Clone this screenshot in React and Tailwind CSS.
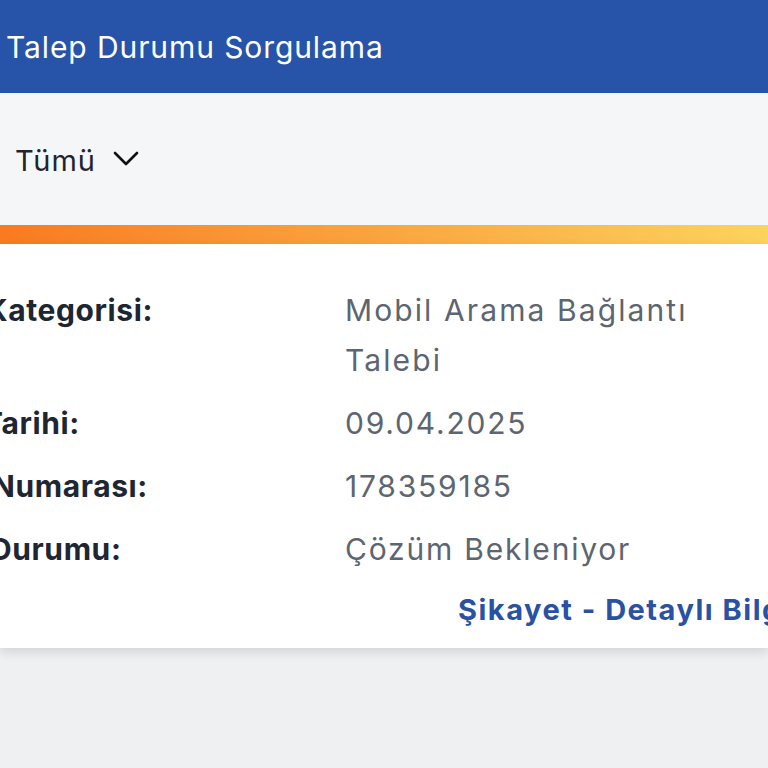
import React from "react";

const font = { fontFamily: "Inter, 'Noto Sans', sans-serif" };

function Row({ label, children, labelShift }) {
  return (
    <div className="flex items-start">
      <div className="w-[345px] shrink-0 overflow-hidden">
        <div className={`whitespace-nowrap font-bold text-[#1e2533] tracking-[0.6px] ${labelShift}`}>{label}</div>
      </div>
      <div className="flex-1 text-[#5d6570] tracking-[1.8px]">{children}</div>
    </div>
  );
}

export default function App() {
  return (
    <div className="w-[768px] h-[768px] overflow-hidden bg-[#eff0f2]" style={font}>
      <div className="h-[93px] bg-[#2754a8] flex items-center pl-[6px]">
        <span className="text-white text-[30px] tracking-[0.9px] leading-none">Talep Durumu Sorgulama</span>
      </div>
      <div className="h-[132px] bg-[#f5f6f8] flex items-center pl-[15px] gap-[17px]">
        <span className="text-[29px] tracking-[1px] text-[#1f2430] leading-none mt-[3px]">Tümü</span>
        <svg width="26" height="18" viewBox="0 0 26 18" fill="none" className="mt-[-2px]">
          <path d="M2 4 L13 15 L24 4" stroke="#111" strokeWidth="2.6" strokeLinecap="round" strokeLinejoin="round" />
        </svg>
      </div>
      <div className="h-[19px] bg-gradient-to-r from-[#f97a20] via-[#f9a540] to-[#fbd35d]" />
      <div className="bg-white shadow-[0_4px_10px_rgba(0,0,0,0.12)] pt-[41px] pb-[13px] overflow-hidden">
        <div className="flex flex-col gap-[13px] text-[30px] leading-[50px]">
          <Row label="Kategorisi:" labelShift="-ml-[14px]">
            <div className="w-[380px] tracking-[2.1px]">Mobil Arama Bağlantı Talebi</div>
          </Row>
          <Row label="Tarihi:" labelShift="-ml-[17px]">09.04.2025</Row>
          <Row label="Numarası:" labelShift="-ml-[8px]">178359185</Row>
          <Row label="Durumu:" labelShift="-ml-[10px]">Çözüm Bekleniyor</Row>
        </div>
        <div className="mt-[11px] pl-[458px] whitespace-nowrap text-[29px] tracking-[1.5px] leading-[50px] font-bold text-[#2a51a2]">
          Şikayet - Detaylı Bilgi
        </div>
      </div>
    </div>
  );
}
